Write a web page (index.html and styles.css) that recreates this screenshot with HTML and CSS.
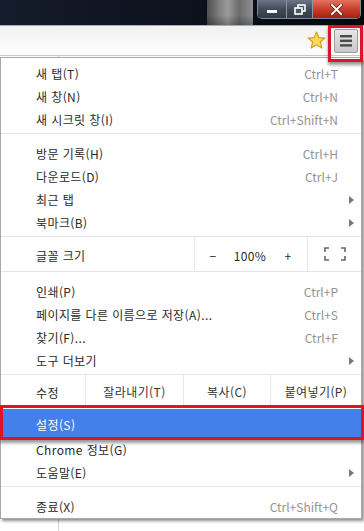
FILE: index.html
```html
<!DOCTYPE html>
<html lang="ko">
<head>
  <meta charset="UTF-8">
  <meta name="viewport" content="width=device-width, initial-scale=1.0">
  <title>Chrome 메뉴</title>
  <link rel="stylesheet" href="styles.css">
</head>

<body>

  <!-- Window title bar -->
  <div class="titlebar">
    <div class="blurred"></div>
    <div class="window-buttons">
      <div class="win-btn win-min"><span class="dash"></span></div>
      <div class="win-btn win-max">
        <svg width="12" height="11" viewBox="0 0 12 11">
          <rect x="4" y="1" width="7" height="6" fill="none" stroke="#fff" stroke-width="1.6"/>
          <rect x="1" y="4" width="7" height="6" fill="#4b5563" stroke="#fff" stroke-width="1.6"/>
        </svg>
      </div>
      <div class="win-btn win-close">
        <svg width="13" height="11" viewBox="0 0 13 11">
          <path d="M2 1 L11 10 M11 1 L2 10" stroke="#5a1a12" stroke-width="3.4" stroke-linecap="square"/>
          <path d="M2 1 L11 10 M11 1 L2 10" stroke="#fff" stroke-width="2" stroke-linecap="square"/>
        </svg>
      </div>
    </div>
  </div>

  <!-- Toolbar -->
  <div class="toolbar">
    <svg class="star" width="19" height="19" viewBox="0 0 20 20">
      <path d="M10 1.2 L12.6 7 L18.8 7.5 L14.1 11.6 L15.6 17.9 L10 14.6 L4.4 17.9 L5.9 11.6 L1.2 7.5 L7.4 7 Z"
            fill="#f9d85a" stroke="#d59a26" stroke-width="1.2" stroke-linejoin="round"/>
    </svg>
    <div class="menu-btn">
      <svg width="14" height="13" viewBox="0 0 14 13">
        <rect x="1" y="1" width="12" height="2.4" fill="#4a4a4a"/>
        <rect x="1" y="5.6" width="12" height="2.4" fill="#4a4a4a"/>
        <rect x="1" y="10.2" width="12" height="2.4" fill="#4a4a4a"/>
      </svg>
    </div>
  </div>

  <!-- Page behind the menu -->
  <div class="page">
    <div class="page-line"></div>
  </div>

  <!-- Chrome menu -->
  <div class="menu">
    <div class="group group-first">
      <div class="item"><span class="label">새 탭(T)</span><span class="key">Ctrl+T</span><span class="sub"></span></div>
      <div class="item"><span class="label">새 창(N)</span><span class="key">Ctrl+N</span><span class="sub"></span></div>
      <div class="item"><span class="label">새 시크릿 창(I)</span><span class="key">Ctrl+Shift+N</span><span class="sub"></span></div>
    </div>

    <div class="group">
      <div class="item"><span class="label">방문 기록(H)</span><span class="key">Ctrl+H</span><span class="sub"></span></div>
      <div class="item"><span class="label">다운로드(D)</span><span class="key">Ctrl+J</span><span class="sub"></span></div>
      <div class="item"><span class="label">최근 탭</span><span class="sub"><i class="arrow"></i></span></div>
      <div class="item"><span class="label">북마크(B)</span><span class="sub"><i class="arrow"></i></span></div>
    </div>

    <div class="row zoom-row">
      <span class="row-label">글꼴 크기</span>
      <div class="zoom-ctrl">
        <span class="zoom-minus">−</span>
        <span class="zoom-value">100%</span>
        <span class="zoom-plus">+</span>
      </div>
      <div class="fullscreen">
        <svg width="22" height="14" viewBox="0 0 22 14">
          <path d="M1 5 V1 H5 M17 1 H21 V5 M21 9 V13 H17 M5 13 H1 V9" fill="none" stroke="#666" stroke-width="1.6"/>
        </svg>
      </div>
    </div>

    <div class="group">
      <div class="item"><span class="label">인쇄(P)</span><span class="key">Ctrl+P</span><span class="sub"></span></div>
      <div class="item"><span class="label">페이지를 다른 이름으로 저장(A)...</span><span class="key">Ctrl+S</span><span class="sub"></span></div>
      <div class="item"><span class="label">찾기(F)...</span><span class="key">Ctrl+F</span><span class="sub"></span></div>
      <div class="item"><span class="label">도구 더보기</span><span class="sub"><i class="arrow"></i></span></div>
    </div>

    <div class="row edit-row">
      <span class="row-label edit-label">수정</span>
      <span class="edit-btn edit-cut">잘라내기(T)</span>
      <span class="edit-btn edit-copy">복사(C)</span>
      <span class="edit-btn edit-paste">붙여넣기(P)</span>
    </div>

    <div class="group group-settings">
      <div class="item item-active"><span class="label">설정(S)</span><span class="sub"></span></div>
      <div class="item"><span class="label">Chrome 정보(G)</span><span class="sub"></span></div>
      <div class="item"><span class="label">도움말(E)</span><span class="sub"><i class="arrow"></i></span></div>
    </div>

    <div class="group group-last">
      <div class="item"><span class="label">종료(X)</span><span class="key">Ctrl+Shift+Q</span><span class="sub"></span></div>
    </div>
  </div>

  <!-- Red annotation boxes -->
  <div class="mark mark-button"></div>
  <div class="mark mark-settings"></div>

</body>
</html>
```

FILE: styles.css
```css
/* General styles */
body {
  margin: 0;
  width: 364px;
  height: 531px;
  overflow: hidden;
  position: relative;
  background-color: #fff;
  font-family: "Noto Sans CJK KR", "Noto Sans", sans-serif;
  font-size: 12px;
  color: #2a2a2a;
}

/* Title bar */
.titlebar {
  height: 25px;
  display: flex;
  background: linear-gradient(90deg, #141b2a 0%, #0c111c 55%, #05070b 100%);
}

.blurred {
  width: 46px;
  height: 25px;
  margin-left: 207px;
  background:
    linear-gradient(180deg, rgba(0,0,0,0) 60%, rgba(0,0,0,0.25) 100%),
    linear-gradient(90deg, #4e4e4e 0%, #7d7d7d 25%, #9b9b9b 45%, #6c6c6c 70%, #8f8f8f 100%);
}

.window-buttons {
  display: flex;
  margin-left: 4px;
  height: 18px;
  border: 1px solid #7b8696;
  border-top: none;
  border-radius: 0 0 5px 5px;
  overflow: hidden;
}

.win-btn {
  display: flex;
  align-items: center;
  justify-content: center;
  height: 18px;
}

.win-min,
.win-max {
  background: linear-gradient(180deg, #6c7685 0%, #434c59 50%, #343b46 100%);
  border-right: 1px solid #8a95a5;
}

.win-min {
  width: 28px;
}

.win-min .dash {
  width: 10px;
  height: 3px;
  margin-top: 5px;
  background-color: #fff;
  box-shadow: 0 0 1px #222;
}

.win-max {
  width: 25px;
}

.win-close {
  width: 47px;
  background: linear-gradient(180deg, #e2735f 0%, #c8402c 50%, #a5200f 100%);
}

/* Toolbar */
.toolbar {
  height: 29px;
  display: flex;
  justify-content: flex-end;
  align-items: center;
  gap: 8px;
  padding-right: 6px;
  border-top: 1px solid #a7adb5;
  border-bottom: 1px solid #c9c9c9;
  background: linear-gradient(180deg, #f1f1f1 0%, #fdfdfd 100%);
}

.menu-btn {
  width: 22px;
  height: 22px;
  display: flex;
  align-items: center;
  justify-content: center;
  border: 1px solid #9c9c9c;
  border-radius: 2px;
  background: linear-gradient(180deg, #e6e6e6 0%, #c9c9c9 100%);
}

/* Page under the menu */
.page {
  height: 475px;
}

.page-line {
  height: 100%;
  margin-left: 58px;
  border-left: 1px solid #d4d4d4;
}

/* Menu */
.menu {
  position: absolute;
  top: 57px;
  left: 0;
  width: 360px;
  background-color: #fff;
  border: 1px solid #a9a9a9;
  box-shadow: 2px 2px 3px rgba(0, 0, 0, 0.45);
}

.group {
  padding: 8px 0 2px;
  border-top: 1px solid #e6e6e6;
}

.group-first {
  padding-top: 4px;
  border-top: none;
}

.group-settings {
  padding-top: 1px;
}

.group-last {
  padding-bottom: 0;
}

.item {
  display: flex;
  align-items: center;
  height: 23px;
  line-height: 23px;
  padding-left: 35px;
}

.item-active {
  height: 29px;
  padding-top: 2px;
  box-sizing: border-box;
  background-color: #4380ea;
  color: #fff;
}

.label {
  flex: 1;
  white-space: nowrap;
  letter-spacing: 0.4px;
}

.key {
  color: #939393;
}

.sub {
  width: 23px;
  display: flex;
  align-items: center;
}

.arrow {
  margin-left: 11px;
  width: 0;
  height: 0;
  border-top: 4px solid transparent;
  border-bottom: 4px solid transparent;
  border-left: 5px solid #7a7a7a;
}

/* Font size and edit rows */
.row {
  display: flex;
  border-top: 1px solid #e6e6e6;
  letter-spacing: 0.4px;
}

.zoom-row {
  height: 34px;
}

.edit-row {
  height: 32px;
}

.row-label {
  flex: 1;
  display: flex;
  align-items: center;
  padding-left: 35px;
  padding-top: 2px;
}

.zoom-ctrl {
  width: 112px;
  display: flex;
  border-left: 1px solid #e6e6e6;
  border-right: 1px solid #e6e6e6;
}

.zoom-ctrl span {
  display: flex;
  align-items: center;
  justify-content: center;
  padding-top: 2px;
}

.zoom-minus {
  width: 36px;
}

.zoom-value {
  width: 38px;
}

.zoom-plus {
  width: 38px;
}

.fullscreen {
  width: 53px;
  display: flex;
  align-items: center;
  justify-content: center;
}

.edit-label {
  flex: none;
  width: 49px;
}

.edit-btn {
  display: flex;
  align-items: center;
  justify-content: center;
  border-left: 1px solid #e6e6e6;
  color: #333;
}

.edit-cut {
  width: 97px;
}

.edit-copy {
  width: 86px;
}

.edit-paste {
  flex: 1;
}

/* Red annotation boxes */
.mark {
  position: absolute;
  border: 3px solid #dc1428;
  box-shadow: 0 3px 3px rgba(0, 0, 0, 0.4);
}

.mark-button {
  top: 25px;
  left: 328px;
  width: 29px;
  height: 31px;
}

.mark-settings {
  top: 405px;
  left: 0;
  width: 358px;
  height: 29px;
}
```
